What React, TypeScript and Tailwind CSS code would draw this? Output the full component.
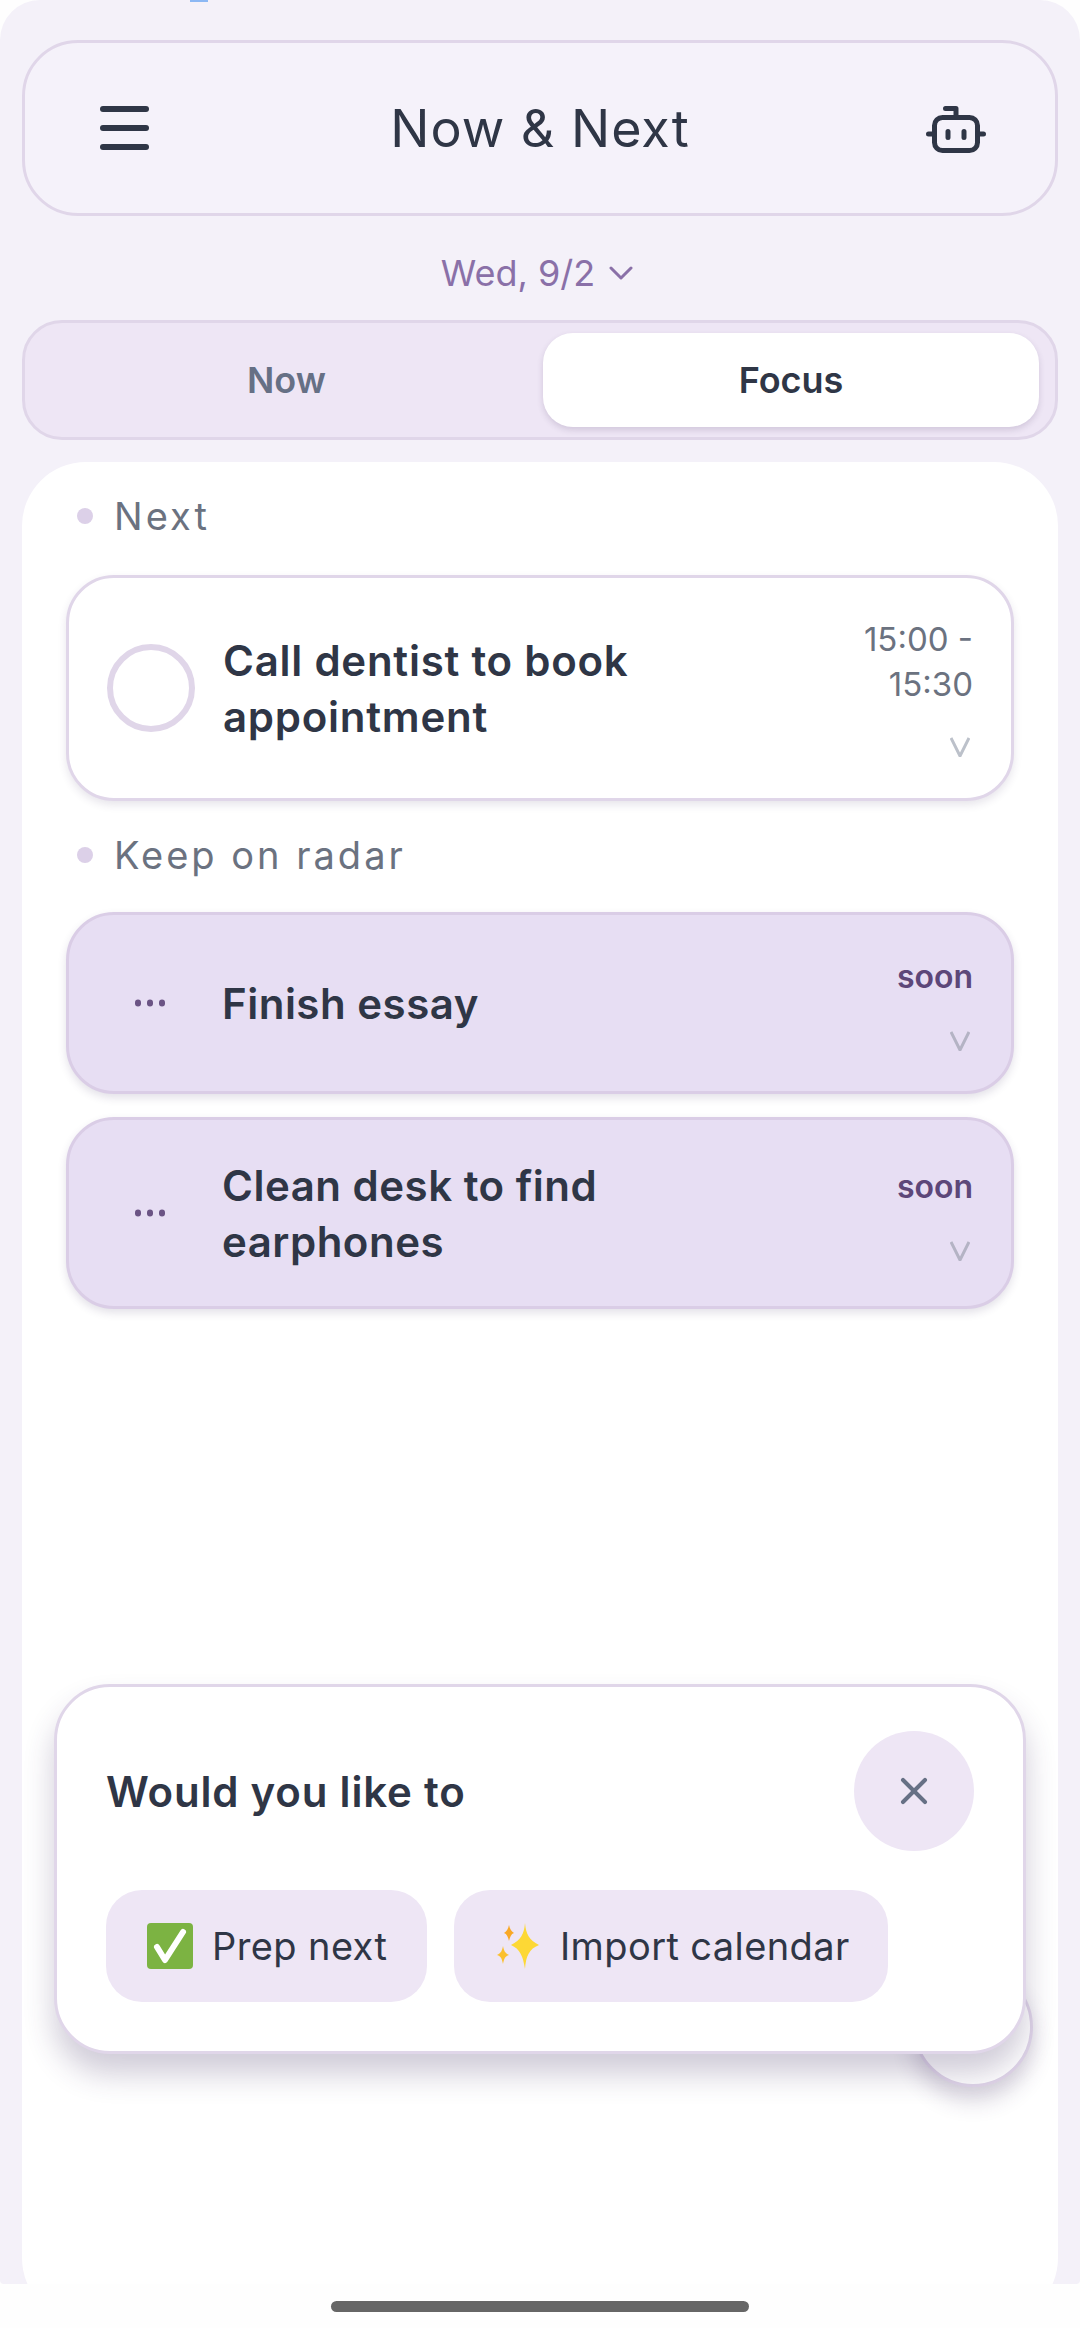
import React from 'react';
import { X } from 'lucide-react';

const BotIcon = () => (
  <svg width="60" height="49" viewBox="0 0 60 49" fill="none" stroke="#2f3646" strokeWidth="5" strokeLinecap="round" strokeLinejoin="round">
    <path d="M19.5 4.5H30v9" />
    <rect x="8.5" y="13.5" width="43" height="33" rx="8" />
    <path d="M2.5 30h6M51.5 30h6M22 27.5v6M38 27.5v6" />
  </svg>
);

const CheckEmoji = () => (
  <svg width="48" height="48" viewBox="0 0 48 48">
    <rect x="1" y="1" width="46" height="46" rx="4" fill="#7cb342" />
    <path d="M11 25l8 13L37 10" fill="none" stroke="#fff" strokeWidth="6" strokeLinecap="round" strokeLinejoin="round" />
  </svg>
);

const SparkleEmoji = () => (
  <svg width="48" height="48" viewBox="0 0 48 48">
    <path d="M31 1c1 11 4 17 14 22-10 4-13 11-14 24-2-13-5-20-14-24 10-5 13-11 14-22z" fill="#fdd835" />
    <path d="M15 3c1 4 2 6 5 8-3 1-4 4-5 8-1-4-2-7-5-8 3-2 4-4 5-8z" fill="#f9a825" />
    <path d="M9 24c1 5 2 7 6 9-4 1-5 4-6 9-1-5-2-8-6-9 4-2 5-4 6-9z" fill="#fbc02d" />
  </svg>
);

const Chevron = ({ color }: { color: string }) => (
  <svg className="mr-[3px]" width="20" height="20" viewBox="0 0 20 20" fill="none" stroke={color} strokeWidth="3">
    <path d="M1 1l9 18 9-18" />
  </svg>
);

const SectionLabel = ({ label, tracking }: { label: string; tracking: string }) => (
  <div className="flex items-center h-[46px] pl-[55px] gap-[21px]">
    <span className="w-[16px] h-[16px] rounded-full bg-[#dcd0e8]" />
    <span className={`text-[38px] leading-[46px] text-[#6b7280] ${tracking}`}>{label}</span>
  </div>
);

const TaskCard = ({ title, heightClass }: { title: string[]; heightClass: string }) => (
  <div className={`relative flex items-center mx-[44px] ${heightClass} pl-[153px] rounded-[48px] border-[3px] border-[#dacde6] bg-[#e7def3] shadow-[0_4px_8px_rgba(60,40,90,0.14)]`}>
    <span className="absolute left-[66px] top-1/2 -translate-y-1/2 flex gap-[6px]">
      <i className="w-[6px] h-[7px] rounded-full bg-[#6b5384]" />
      <i className="w-[6px] h-[7px] rounded-full bg-[#6b5384]" />
      <i className="w-[6px] h-[7px] rounded-full bg-[#6b5384]" />
    </span>
    <div className="pt-[2px] text-[42px] leading-[56px] font-semibold tracking-[0.5px] text-[#2f3646]">
      {title.map(t => <div key={t}>{t}</div>)}
    </div>
    <div className="absolute right-[38px] inset-y-0 pt-[2px] flex flex-col items-end justify-center gap-[34px]">
      <span className="text-[32px] leading-[40px] font-semibold text-[#5d4779]">soon</span>
      <Chevron color="#b4b3c4" />
    </div>
  </div>
);

export default function App() {
  return (
    <div className="w-[1080px] h-[2328px] bg-[#fefefe] overflow-hidden" style={{ fontFamily: 'Inter, sans-serif' }}>
      <div className="relative h-[2284px] overflow-hidden rounded-t-[40px] rounded-b-[4px] bg-[#f4f1f9] px-[22px] pt-[40px]">
        <span className="absolute left-[190px] top-0 w-[18px] h-[2px] bg-[#8cb8f4]" />

        {/* Header */}
        <header className="flex items-center justify-between h-[176px] pl-[75px] pr-[69px] rounded-[56px] border-[3px] border-[#e0d6e9] bg-[#f5f2fa]">
          <div className="flex flex-col gap-[13px] w-[49px]">
            <span className="h-[6px] rounded-full bg-[#2f3646]" />
            <span className="h-[6px] rounded-full bg-[#2f3646]" />
            <span className="h-[6px] rounded-full bg-[#2f3646]" />
          </div>
          <h1 className="ml-[5px] pt-[2px] text-[52px] leading-[60px] font-normal tracking-[1px] text-[#2f3646]">Now &amp; Next</h1>
          <BotIcon />
        </header>

        {/* Date */}
        <div className="flex items-center justify-center gap-[14px] h-[104px] pt-[9px] pr-[6px] text-[36px] text-[#8a70a8]">
          <span>Wed, 9/2</span>
          <svg width="24" height="14" viewBox="0 0 24 14" fill="none" stroke="#8a70a8" strokeWidth="3" strokeLinecap="round" strokeLinejoin="round">
            <path d="M2 2l10 10L22 2" />
          </svg>
        </div>

        {/* Tabs */}
        <div className="flex items-center h-[120px] pl-[5px] pr-[16px] rounded-[40px] border-[3px] border-[#e0d6e9] bg-[#eee6f5]">
          <div className="w-[513px] text-center text-[36px] font-semibold text-[#667085]">Now</div>
          <div className="flex-1 flex items-center justify-center h-[94px] rounded-[30px] bg-white text-[36px] font-semibold text-[#2f3646] shadow-[0_3px_6px_rgba(60,40,90,0.16)]">Focus</div>
        </div>

        {/* Content */}
        <main className="relative h-[1860px] mt-[22px] pt-[31px] rounded-[64px] bg-white">
          <SectionLabel label="Next" tracking="tracking-[3px]" />

          <div className="relative flex items-center mx-[44px] mt-[36px] h-[226px] pl-[38px] gap-[28px] rounded-[48px] border-[3px] border-[#e0d6e9] bg-white shadow-[0_4px_8px_rgba(60,40,90,0.12)]">
            <span className="w-[88px] h-[88px] rounded-full border-[6px] border-[#e0d6e9]" />
            <div className="pt-[2px] text-[42px] leading-[56px] font-semibold tracking-[0.75px] text-[#2f3646]">
              <div>Call dentist to book</div>
              <div>appointment</div>
            </div>
            <div className="absolute right-[38px] top-[39px] bottom-[41px] flex flex-col items-end justify-between">
              <div className="text-right text-[33px] leading-[45px] text-[#6b7280]">
                <div>15:00 -</div>
                <div>15:30</div>
              </div>
              <Chevron color="#bcc1ca" />
            </div>
          </div>

          <div className="mt-[31px]">
            <SectionLabel label="Keep on radar" tracking="tracking-[3px]" />
          </div>

          <div className="mt-[34px]">
            <TaskCard title={['Finish essay']} heightClass="h-[182px]" />
          </div>
          <div className="mt-[23px]">
            <TaskCard title={['Clean desk to find', 'earphones']} heightClass="h-[192px]" />
          </div>

          {/* FAB behind the popup */}
          <div className="absolute left-[891px] top-[1505px] w-[120px] h-[120px] rounded-full bg-white border-[3px] border-[#e0d6e9] shadow-[0_14px_22px_rgba(60,40,90,0.2)]" />

          {/* Suggestion popup */}
          <div className="absolute left-[32px] top-[1222px] w-[972px] h-[370px] px-[49px] pt-[44px] rounded-[56px] border-[3px] border-[#e0d6e9] bg-white shadow-[0_20px_30px_rgba(60,40,90,0.24)]">
            <div className="flex items-center justify-between">
              <span className="text-[42px] font-semibold tracking-[0.8px] text-[#2f3646]">Would you like to</span>
              <span className="flex items-center justify-center w-[120px] h-[120px] rounded-full bg-[#eee6f5]">
                <X size={44} color="#667085" strokeWidth={2.2} />
              </span>
            </div>
            <div className="flex gap-[27px] mt-[39px]">
              <div className="flex items-center gap-[18px] h-[112px] w-[321px] pl-[40px] rounded-[36px] bg-[#eee6f5] text-[38px] tracking-[0.4px] text-[#2f3646]">
                <CheckEmoji />
                <span>Prep next</span>
              </div>
              <div className="flex items-center gap-[18px] h-[112px] w-[434px] pl-[40px] rounded-[36px] bg-[#eee6f5] text-[38px] tracking-[0.4px] text-[#2f3646]">
                <SparkleEmoji />
                <span>Import calendar</span>
              </div>
            </div>
          </div>
        </main>
      </div>

      {/* Home bar */}
      <div className="flex justify-center pt-[17px]">
        <span className="w-[418px] h-[11px] rounded-full bg-[#666666]" />
      </div>
    </div>
  );
}
